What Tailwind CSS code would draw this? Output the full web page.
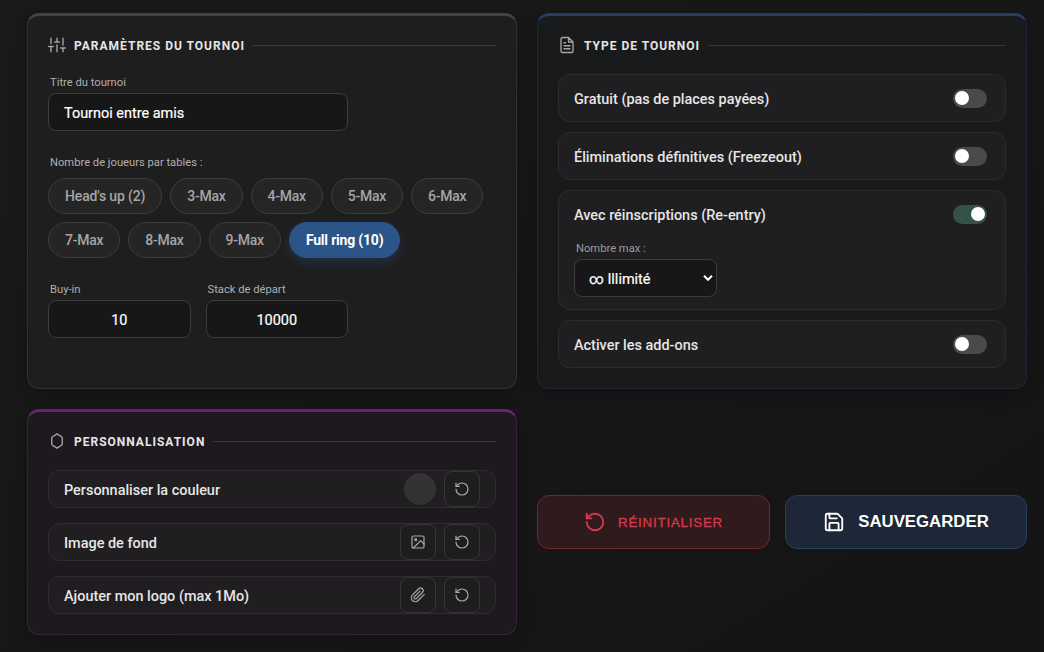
<!DOCTYPE html>
<html lang="fr">
    <head>
        <meta charset="utf-8">
        <meta name="viewport" content="width=device-width, initial-scale=1.0">
        <script src="https://cdn.jsdelivr.net/npm/@tailwindcss/browser@4"></script>
        <title>Paramètres du tournoi</title>
    </head>
    <body class="h-screen overflow-hidden bg-linear-to-br from-[#1a1a1a] to-[#141414] font-[Roboto,sans-serif] text-[14.45px] font-medium text-[#e6e6e6]">
        <!-- Shared icons -->
        <svg class="hidden">
            <symbol id="icon-reset" viewBox="0 0 24 24">
                <path d="M3 12a9 9 0 1 0 9-9 9.75 9.75 0 0 0-6.74 2.74L3 8"/>
                <path d="M3 3v5h5"/>
            </symbol>
        </svg>

        <main class="grid grid-cols-2 gap-5 pt-[13px] pl-[27px] pr-[17px]">
            <!-- Tournament settings -->
            <section class="h-[376px] rounded-xl border border-t-3 border-[#303030] border-t-[#434343] bg-[#1e1e1e] p-5 shadow-[0_4px_16px_rgba(0,0,0,0.25)]">
                <div class="mb-5 flex h-[18px] items-center gap-2">
                    <svg class="size-[18px] shrink-0 fill-none stroke-[#a6a6a6] stroke-[1.8]" viewBox="0 0 24 24" stroke-linecap="round" stroke-linejoin="round">
                        <path d="M4 21v-7M4 10V3M12 21v-9M12 8V3M20 21v-5M20 12V3M1 14h6M9 8h6M17 16h6"/>
                    </svg>
                    <h2 class="whitespace-nowrap pt-px text-xs font-bold tracking-[1px]">PARAMÈTRES DU TOURNOI</h2>
                    <div class="h-px flex-1 bg-[#3c3c3c]"></div>
                </div>

                <label class="block h-[19px] pl-0.5 text-[11.2px] font-normal leading-[17px] text-[#b0b0b0]">Titre du tournoi</label>
                <div class="mb-[23px] flex h-[38px] w-[300px] items-center rounded-lg border border-[#3c3c3c] bg-[#171717] px-[15px] pt-[3px] font-normal text-white [-webkit-text-stroke:0.2px]">Tournoi entre amis</div>

                <label class="block h-6 pl-0.5 text-[11.2px] font-normal leading-[17px] text-[#b0b0b0]">Nombre de joueurs par tables :</label>
                <div class="mb-[23px] flex flex-wrap gap-2 text-sm tracking-[-0.25px] text-[#a6a6a6]">
                    <button class="h-9 rounded-full border border-[#3c3c3c] bg-[#252525] px-4 tracking-[-0.15px]">Head's up (2)</button>
                    <button class="h-9 rounded-full border border-[#3c3c3c] bg-[#252525] px-4">3-Max</button>
                    <button class="h-9 rounded-full border border-[#3c3c3c] bg-[#252525] px-4">4-Max</button>
                    <button class="h-9 rounded-full border border-[#3c3c3c] bg-[#252525] px-4">5-Max</button>
                    <button class="h-9 rounded-full border border-[#3c3c3c] bg-[#252525] px-4">6-Max</button>
                    <button class="h-9 rounded-full border border-[#3c3c3c] bg-[#252525] px-4">7-Max</button>
                    <button class="h-9 rounded-full border border-[#3c3c3c] bg-[#252525] px-4">8-Max</button>
                    <button class="h-9 rounded-full border border-[#3c3c3c] bg-[#252525] px-4">9-Max</button>
                    <button class="h-9 rounded-full border border-[#2b5489] bg-[#2b5489] px-4 font-bold tracking-[-0.2px] text-white shadow-[0_4px_12px_rgba(43,84,137,0.35)]">Full ring (10)</button>
                </div>

                <div class="grid w-[300px] grid-cols-2 gap-[15px]">
                    <div>
                        <label class="block h-[19px] pl-0.5 text-[11.2px] font-normal leading-[17px] text-[#b0b0b0]">Buy-in</label>
                        <div class="flex h-[38px] items-center justify-center rounded-lg border border-[#3c3c3c] bg-[#171717] pt-[3px] font-normal text-white [-webkit-text-stroke:0.2px]">10</div>
                    </div>
                    <div>
                        <label class="block h-[19px] pl-0.5 text-[11.2px] font-normal leading-[17px] text-[#b0b0b0]">Stack de départ</label>
                        <div class="flex h-[38px] items-center justify-center rounded-lg border border-[#3c3c3c] bg-[#171717] pt-[3px] font-normal text-white [-webkit-text-stroke:0.2px]">10000</div>
                    </div>
                </div>
            </section>

            <!-- Tournament type -->
            <section class="h-[376px] rounded-xl border border-t-3 border-[#1e2733] border-t-[#233f66] bg-[#191a1c] p-5 shadow-[0_4px_16px_rgba(0,0,0,0.25)]">
                <div class="mb-5 flex h-[18px] items-center gap-2">
                    <svg class="size-[18px] shrink-0 fill-none stroke-[#a6a6a6] stroke-[1.8]" viewBox="0 0 24 24" stroke-linecap="round" stroke-linejoin="round">
                        <path d="M14 2H6a2 2 0 0 0-2 2v16a2 2 0 0 0 2 2h12a2 2 0 0 0 2-2V8zM14 2v6h6M16 13H8M16 17H8M10 9H8"/>
                    </svg>
                    <h2 class="whitespace-nowrap pt-px text-xs font-bold tracking-[1px]">TYPE DE TOURNOI</h2>
                    <div class="h-px flex-1 bg-[#37383a]"></div>
                </div>

                <div class="flex flex-col gap-2.5">
                    <div class="flex h-12 items-center justify-between rounded-xl border border-[#2b2c2e] bg-[#1f1f21] pl-[15px] pr-[18px]">
                        <span class="pt-[3px]">Gratuit (pas de places payées)</span>
                        <div class="flex h-[19px] w-[34px] items-center rounded-full bg-[#4a4a4c] px-0.5"><div class="size-3.5 rounded-full bg-white"></div></div>
                    </div>
                    <div class="flex h-12 items-center justify-between rounded-xl border border-[#2b2c2e] bg-[#1f1f21] pl-[15px] pr-[18px]">
                        <span class="pt-[3px]">Éliminations définitives (Freezeout)</span>
                        <div class="flex h-[19px] w-[34px] items-center rounded-full bg-[#4a4a4c] px-0.5"><div class="size-3.5 rounded-full bg-white"></div></div>
                    </div>
                    <div class="h-[120px] rounded-xl border border-[#2b2c2e] bg-[#1f1f21] pl-[15px] pr-[18px]">
                        <div class="flex h-[46px] items-center justify-between">
                            <span class="pt-[3px]">Avec réinscriptions (Re-entry)</span>
                            <div class="flex h-[19px] w-[34px] items-center justify-end rounded-full bg-[#35524a] px-0.5"><div class="size-3.5 rounded-full bg-white"></div></div>
                        </div>
                        <label class="mt-[3px] block h-[19px] pl-0.5 text-[11.2px] font-normal leading-[17px] text-[#9c9c9e]">Nombre max :</label>
                        <div class="flex h-[38px] w-[143px] items-center justify-between rounded-lg border border-[#3c3c3e] bg-[#171719] pl-3.5 pr-[3px] font-normal text-white">
                            <span class="pt-[3px] [-webkit-text-stroke:0.2px]">∞ Illimité</span>
                            <svg class="h-[6px] w-[10px] fill-none stroke-white stroke-2" viewBox="0 0 10 6"><path d="M1 .8l4 4 4-4"/></svg>
                        </div>
                    </div>
                    <div class="flex h-12 items-center justify-between rounded-xl border border-[#2b2c2e] bg-[#1f1f21] pl-[15px] pr-[18px]">
                        <span class="pt-[3px]">Activer les add-ons</span>
                        <div class="flex h-[19px] w-[34px] items-center rounded-full bg-[#4a4a4c] px-0.5"><div class="size-3.5 rounded-full bg-white"></div></div>
                    </div>
                </div>
            </section>

            <!-- Customisation -->
            <section class="h-[226px] rounded-xl border border-t-3 border-[#3a1f3f] border-t-[#6b2178] bg-[#1e191f] p-5 shadow-[0_4px_16px_rgba(0,0,0,0.25)]">
                <div class="mb-5 flex h-[18px] items-center gap-2">
                    <svg class="size-[18px] shrink-0 fill-none stroke-[#a6a6a6] stroke-[1.8]" viewBox="0 0 24 24" stroke-linecap="round" stroke-linejoin="round">
                        <path d="M12 2.5l6 3.8a2 2 0 0 1 1 1.7v8a2 2 0 0 1-1 1.7l-6 3.8-6-3.8a2 2 0 0 1-1-1.7V8a2 2 0 0 1 1-1.7z"/>
                    </svg>
                    <h2 class="whitespace-nowrap pt-px text-xs font-bold tracking-[1px]">PERSONNALISATION</h2>
                    <div class="h-px flex-1 bg-[#3b363b]"></div>
                </div>

                <div class="flex flex-col gap-[15px]">
                    <div class="flex h-[38px] items-center gap-2 rounded-xl border border-[#302c31] bg-[#201e21] px-[15px]">
                        <span class="flex-1 pt-[3px]">Personnaliser la couleur</span>
                        <div class="size-8 rounded-full bg-[#333333]"></div>
                        <button class="flex size-9 items-center justify-center rounded-lg border border-[#363636] bg-[#1d1e1d]">
                            <svg class="size-4 fill-none stroke-[#a8a8a8] stroke-[1.8]" stroke-linecap="round" stroke-linejoin="round"><use href="#icon-reset"/></svg>
                        </button>
                    </div>
                    <div class="flex h-[38px] items-center gap-2 rounded-xl border border-[#302c31] bg-[#201e21] px-[15px]">
                        <span class="flex-1 pt-[3px]">Image de fond</span>
                        <button class="flex size-9 items-center justify-center rounded-lg border border-[#363636] bg-[#1d1e1d]">
                            <svg class="size-4 fill-none stroke-[#a8a8a8] stroke-[1.8]" viewBox="0 0 24 24" stroke-linecap="round" stroke-linejoin="round">
                                <rect x="3" y="3" width="18" height="18" rx="2"/><circle cx="8.5" cy="8.5" r="1.5"/><path d="M21 15l-5-5L5 21"/>
                            </svg>
                        </button>
                        <button class="flex size-9 items-center justify-center rounded-lg border border-[#363636] bg-[#1d1e1d]">
                            <svg class="size-4 fill-none stroke-[#a8a8a8] stroke-[1.8]" stroke-linecap="round" stroke-linejoin="round"><use href="#icon-reset"/></svg>
                        </button>
                    </div>
                    <div class="flex h-[38px] items-center gap-2 rounded-xl border border-[#302c31] bg-[#201e21] px-[15px]">
                        <span class="flex-1 pt-[3px]">Ajouter mon logo (max 1Mo)</span>
                        <button class="flex size-9 items-center justify-center rounded-lg border border-[#363636] bg-[#1d1e1d]">
                            <svg class="size-4 fill-none stroke-[#a8a8a8] stroke-[1.8]" viewBox="0 0 24 24" stroke-linecap="round" stroke-linejoin="round">
                                <path d="M21.44 11.05l-9.19 9.19a6 6 0 0 1-8.49-8.49l9.19-9.19a4 4 0 0 1 5.66 5.66l-9.2 9.19a2 2 0 0 1-2.83-2.83l8.49-8.48"/>
                            </svg>
                        </button>
                        <button class="flex size-9 items-center justify-center rounded-lg border border-[#363636] bg-[#1d1e1d]">
                            <svg class="size-4 fill-none stroke-[#a8a8a8] stroke-[1.8]" stroke-linecap="round" stroke-linejoin="round"><use href="#icon-reset"/></svg>
                        </button>
                    </div>
                </div>
            </section>

            <!-- Actions -->
            <div class="flex items-center gap-[15px] self-center font-['Liberation_Sans',Arial,sans-serif]">
                <button class="flex h-[54px] w-[233px] items-center justify-center gap-3 rounded-xl border border-[#6f2631] bg-[#2f1b1d] text-[13.3px] font-normal tracking-[0.8px] text-[#d63a4c]">
                    <svg class="size-[22px] fill-none stroke-current stroke-2" stroke-linecap="round" stroke-linejoin="round"><use href="#icon-reset"/></svg>
                    <span class="pt-0.5 [-webkit-text-stroke:0.3px]">RÉINITIALISER</span>
                </button>
                <button class="flex h-[54px] flex-1 items-center justify-center gap-[13px] rounded-xl border border-[#23405f] bg-[#1d2737] text-[16.8px] font-bold text-white">
                    <svg class="size-[22px] fill-none stroke-current stroke-2" viewBox="0 0 24 24" stroke-linecap="round" stroke-linejoin="round">
                        <path d="M15.2 3a2 2 0 0 1 1.4.6l3.8 3.8a2 2 0 0 1 .6 1.4V19a2 2 0 0 1-2 2H5a2 2 0 0 1-2-2V5a2 2 0 0 1 2-2z"/>
                        <path d="M17 21v-7a1 1 0 0 0-1-1H8a1 1 0 0 0-1 1v7M7 3v4a1 1 0 0 0 1 1h7"/>
                    </svg>
                    SAUVEGARDER
                </button>
            </div>
        </main>
    </body>
</html>
